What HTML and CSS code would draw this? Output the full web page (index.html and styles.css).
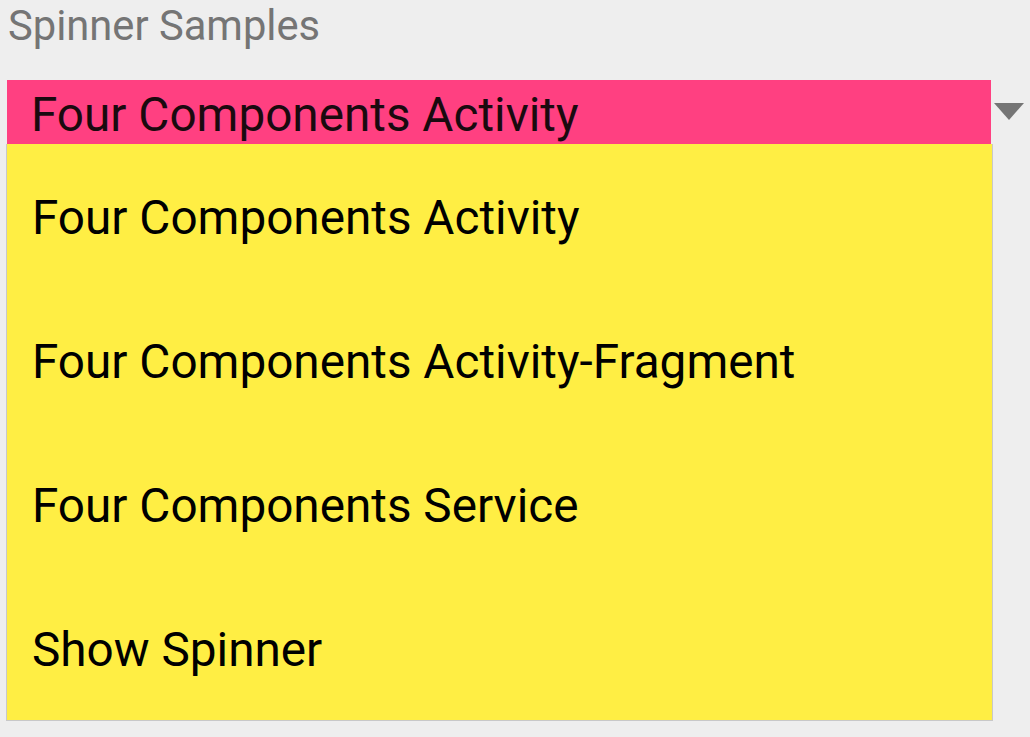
FILE: index.html
```html
<!DOCTYPE html>
<html>
<head>
<meta charset="utf-8">
<link rel="stylesheet" href="styles.css">
</head>
<body>
<div class="screen">
  <div class="title">Spinner Samples</div>
  <div class="spinner">
    <div class="selected">Four Components Activity</div>
    <div class="arrow"><svg width="30" height="17" viewBox="0 0 30 17"><path d="M0 0 H30 L15 17 Z" fill="#757575"/></svg></div>
  </div>
  <div class="popup">
    <div class="item">Four Components Activity</div>
    <div class="item">Four Components Activity-Fragment</div>
    <div class="item">Four Components Service</div>
    <div class="item">Show Spinner</div>
  </div>
</div>
</body>
</html>
```
FILE: styles.css
```css
html, body {
  margin: 0;
  padding: 0;
  background: #eeeeee;
  font-family: Roboto, "Noto Sans", sans-serif;
}
.screen {
  width: 1030px;
  height: 737px;
  overflow: hidden;
  display: flex;
  flex-direction: column;
}
.title {
  height: 80px;
  padding-left: 8px;
  font-size: 41.7px;
  line-height: 52px;
  color: #757575;
}
.spinner {
  display: flex;
  align-items: center;
  height: 64px;
  padding-left: 7px;
}
.selected {
  width: 984px;
  height: 64px;
  background: #ff4081;
  box-sizing: border-box;
  padding-left: 24px;
  font-size: 47.7px;
  line-height: 70px;
  color: #1a0a0f;
}
.arrow {
  display: flex;
  margin-left: 3px;
  padding-bottom: 2px;
}
.popup {
  margin-left: 6px;
  width: 987px;
  box-sizing: border-box;
  border: 1px solid #c8c8c8;
  border-top: none;
  background: #ffee44;
  display: flex;
  flex-direction: column;
}
.item {
  height: 144px;
  box-sizing: border-box;
  padding-top: 3px;
  display: flex;
  align-items: center;
  padding-left: 25px;
  font-size: 47.7px;
  color: #000;
}
```
